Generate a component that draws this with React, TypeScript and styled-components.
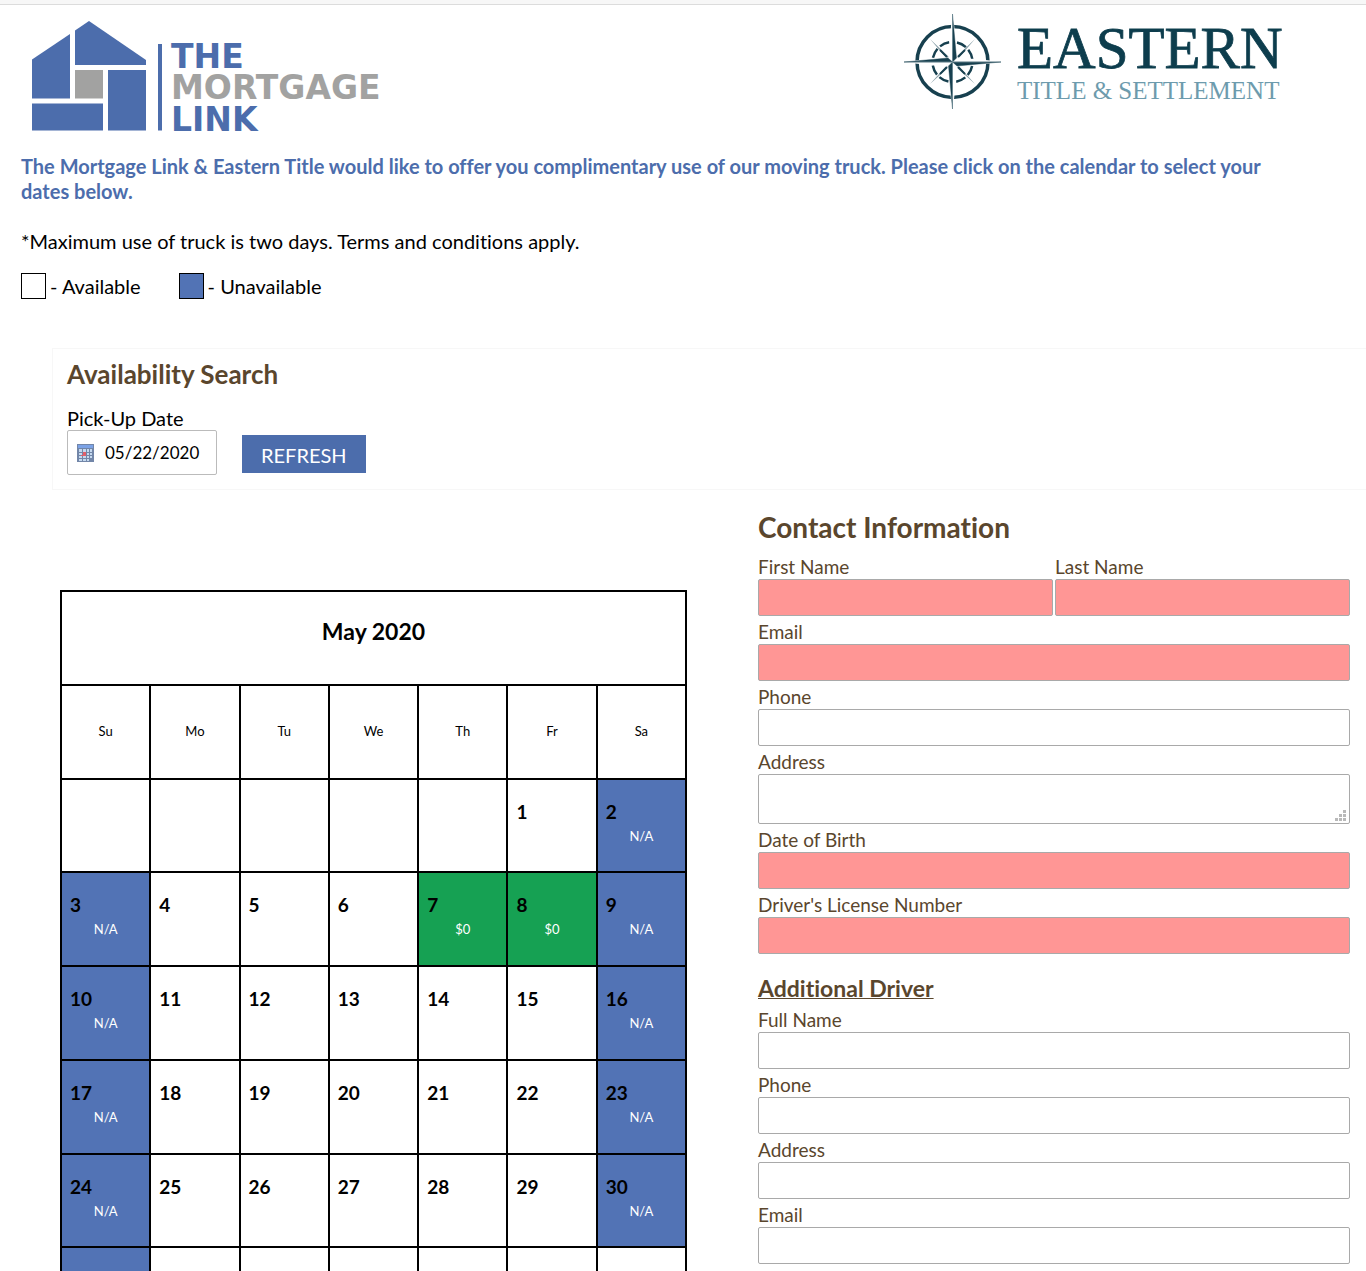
import React, { useId, useState } from 'react';
import styled, { createGlobalStyle, css } from 'styled-components';

const BLUE = '#4c6dac';
const BROWN = '#5a462d';

const GlobalStyle = createGlobalStyle`
  *, *::before, *::after { box-sizing: border-box; }
  body {
    margin: 0;
    background: #fff;
    color: #000;
    font-family: Lato, "Open Sans", sans-serif;
    font-size: 20px;
    line-height: 25px;
    font-variant-ligatures: none;
  }
`;

const Page = styled.div`
  height: 100vh;
  overflow-x: hidden;
  overflow-y: auto;
  scrollbar-width: none;
`;

const TopStrip = styled.div`
  height: 5px;
  background: #f7f7f7;
  border-bottom: 1px solid #dcdcdc;
`;

const Header = styled.header`
  display: flex;
  justify-content: space-between;
  align-items: flex-start;
  padding: 7px 80px 0 29px;
`;

const LinkLogo = styled.svg`
  display: block;
  width: 363px;
  height: 130px;
`;

const EasternLogo = styled.svg`
  display: block;
  width: 383px;
  height: 100px;
`;

const Intro = styled.section`
  padding: 12px 80px 0 21px;
`;

const Offer = styled.p`
  margin: 0 0 25px;
  color: ${BLUE};
  font-weight: 700;
`;

const Terms = styled.p`
  margin: 0 0 19px;
`;

const Legend = styled.ul`
  display: flex;
  gap: 38px;
  margin: 0;
  padding: 0;
  list-style: none;
`;

const LegendItem = styled.li`
  display: flex;
  align-items: center;
  gap: 4px;
`;

const Swatch = styled.span<{ $color: string }>`
  width: 25px;
  height: 26px;
  border: 1px solid #000;
  background: ${(p) => p.$color};
`;

const SearchPanel = styled.form`
  margin: 49px 0 0 52px;
  padding: 9px 14px 14px;
  border: 1px solid #f7f7f7;
  border-right: 0;
`;

const SearchTitle = styled.h2`
  margin: 0 0 17px;
  color: ${BROWN};
  font-size: 26px;
  line-height: 32px;
  font-weight: 700;
`;

const SearchRow = styled.div`
  display: flex;
  align-items: flex-end;
  gap: 25px;
`;

const DateField = styled.div`
  display: flex;
  flex-direction: column;
  width: 150px;
`;

const DateLabel = styled.label`
  line-height: 23px;
`;

const DateBox = styled.span`
  display: flex;
  align-items: center;
  gap: 11px;
  height: 45px;
  padding: 0 9px;
  border: 1px solid #bbb;
  border-radius: 2px;
`;

const DateInput = styled.input`
  flex: 1;
  min-width: 0;
  padding: 0;
  border: 0;
  outline: 0;
  background: transparent;
  color: #000;
  font: inherit;
  font-size: 17px;
`;

const RefreshButton = styled.button`
  height: 38px;
  margin-bottom: 2px;
  padding: 2px 19px 0;
  border: 0;
  background: ${BLUE};
  color: #fff;
  font: inherit;
  cursor: pointer;
`;

const Columns = styled.main`
  display: grid;
  grid-template-columns: minmax(0, 627fr) minmax(0, 592fr);
  column-gap: 71px;
  align-items: start;
  padding: 19px 16px 16px 60px;
`;

const Calendar = styled.table`
  width: 100%;
  height: 752px;
  margin-top: 81px;
  table-layout: fixed;
  border-collapse: collapse;

  tr { height: 12.5%; }
  th, td { border: 2px solid #000; }
`;

const MonthCell = styled.th`
  padding: 0 0 12px;
  font-size: 23px;
  font-weight: 700;
`;

const WeekdayCell = styled.th`
  padding: 0;
  font-size: 13px;
  font-weight: 400;
`;

type DayState = 'open' | 'taken' | 'picked';

const DAY_COLORS: Record<DayState, string> = {
  open: '#fff',
  taken: '#5273b5',
  picked: '#16a153',
};

const DayCell = styled.td<{ $state: DayState }>`
  padding: 19px 0 0 8px;
  vertical-align: top;
  background: ${(p) => DAY_COLORS[p.$state]};
`;

const DayNumber = styled.div`
  font-size: 19px;
  font-weight: 700;
`;

const DayNote = styled.div`
  padding-right: 8px;
  color: #fff;
  font-size: 13px;
  line-height: 24px;
  text-align: center;
`;

const ContactForm = styled.form`
  color: ${BROWN};
  font-size: 19px;
`;

const ContactTitle = styled.h1`
  margin: 0 0 9px;
  font-size: 28px;
  line-height: 36px;
  font-weight: 700;
`;

const DriverTitle = styled.h2`
  margin: 19px 0 4px;
  font-size: 23px;
  line-height: 30px;
  font-weight: 700;
  text-decoration: underline;
  text-decoration-thickness: 1px;
`;

const NameRow = styled.div`
  display: grid;
  grid-template-columns: 1fr 1fr;
  gap: 2px;
`;

const FieldBox = styled.div`
  display: flex;
  flex-direction: column;
  margin-bottom: 3px;
`;

const FieldLabel = styled.label`
  line-height: 25px;
`;

const control = css`
  width: 100%;
  padding: 0 8px;
  border: 1px solid #a9a9a9;
  border-radius: 2px;
  outline: 0;
  color: #000;
  font: inherit;
`;

const TextInput = styled.input<{ $required?: boolean }>`
  ${control}
  height: 37px;
  background: ${(p) => (p.$required ? '#ff9695' : '#fff')};
`;

const AreaWrap = styled.div`
  position: relative;
  display: flex;
`;

const TextArea = styled.textarea`
  ${control}
  height: 50px;
  resize: none;
  background: #fff;
`;

const Grip = styled.svg`
  position: absolute;
  right: 4px;
  bottom: 3px;
  width: 11px;
  height: 11px;
  pointer-events: none;
`;

function Field({ label, required, multiline }: { label: string; required?: boolean; multiline?: boolean }) {
  const id = useId();
  return (
    <FieldBox>
      <FieldLabel htmlFor={id}>{label}</FieldLabel>
      {multiline ? (
        <AreaWrap>
          <TextArea id={id} />
          <Grip viewBox="0 0 11 11" fill="#b9b9b9" aria-hidden="true">
            <path d="M8 0h3v3H8zM4 4h3v3H4zM8 4h3v3H8zM0 8h3v3H0zM4 8h3v3H4zM8 8h3v3H8z" />
          </Grip>
        </AreaWrap>
      ) : (
        <TextInput id={id} $required={required} />
      )}
    </FieldBox>
  );
}

function MortgageLinkLogo() {
  return (
    <LinkLogo viewBox="29 12 363 130" role="img" aria-label="The Mortgage Link">
      <g fill={BLUE}>
        <path d="M32 59.500L70 34V98.500H32z" />
        <path d="M75 30.500L89 21L146 60V65H75z" />
        <path d="M32 103.500H103V130.500H32z" />
        <path d="M108 70H146V130.500H108z" />
        <path d="M158 44H162V130.500H158z" />
      </g>
      <path d="M75 70H103V98.500H75z" fill="#a2a2a1" />
      <g fontFamily="'DejaVu Sans', sans-serif" fontWeight="700" fontSize="33">
        <text x="171" y="67.500" fill={BLUE}>THE</text>
        <text x="171" y="99" fill="#a2a2a1">MORTGAGE</text>
        <text x="171" y="130.500" fill={BLUE}>LINK</text>
      </g>
    </LinkLogo>
  );
}

function EasternTitleLogo() {
  return (
    <EasternLogo viewBox="903 12 383 100" role="img" aria-label="Eastern Title & Settlement">
      <g fill="none" stroke="#17404f">
        <circle cx="952.500" cy="62" r="35.500" strokeWidth="3.500" />
        <circle
          cx="952.500"
          cy="62"
          r="20"
          strokeWidth="2.500"
          strokeDasharray="10 3.400 10 8.016"
          strokeDashoffset="-4"
        />
      </g>
      <g fill="#8ba1a9">
        <path d="M930 39L949 57L947 59zM975 39L956 57L958 59zM930 84L949 67L947 65zM975 84L956 67L958 65z" />
      </g>
      <path
        d="M940 50L947 57M965 50L958 57M940 74L947 67M965 74L958 67"
        stroke="#17404f"
        strokeWidth="1.800"
      />
      <path
        d="M952.500 14L957 58L952.500 62L949 58zM952.500 109L957 66L952.500 62L948 66zM904 62L948 58L952.500 62L948 66zM1001 62L957 58L952.500 62L957 66z"
        fill="#fff"
        stroke="#fff"
      />
      <path
        d="M952.500 14L956.500 58L952.500 62zM952.500 109L948.500 66L952.500 62zM904 62L948 58L952.500 62zM1001 62L957 66L952.500 62z"
        fill="#17404f"
        stroke="#17404f"
        strokeWidth="0.400"
      />
      <path d="M952.500 14V109M904 62H1001" stroke="#6f8c96" strokeWidth="0.800" />
      <g fontFamily="'Liberation Serif', serif">
        <text x="1017" y="68" fontSize="59" fill="#0d3d4d" stroke="#0d3d4d" strokeWidth="0.800">EASTERN</text>
        <text x="1017" y="99" fontSize="25" fill="#6d9bad">TITLE &amp; SETTLEMENT</text>
      </g>
    </EasternLogo>
  );
}

function CalendarIcon() {
  return (
    <svg width="17" height="18" viewBox="0 0 17 18" aria-hidden="true">
      <rect width="17" height="18" fill="#7286a8" />
      <rect x="1" y="1" width="15" height="3" fill="#7ba2e6" />
      <path
        d="M2 5h3v3H2zM6 5h3v3H6zM10 5h2v3h-2zM13 5h2v3h-2zM2 9h3v2H2zM10 9h2v2h-2zM13 9h2v2h-2zM2 12h3v2H2zM6 12h3v2H6zM10 12h2v2h-2zM13 12h2v2h-2zM2 15h3v2H2zM6 15h3v2H6zM10 15h2v2h-2z"
        fill="#c5d9ef"
      />
      <path d="M6 8h3v4H6zM4 11h2v1H4z" fill="#e0606c" />
    </svg>
  );
}

const WEEKDAYS = ['Su', 'Mo', 'Tu', 'We', 'Th', 'Fr', 'Sa'];
const PICKED = [7, 8];
const FIRST_WEEKDAY = 5;
const DAYS_IN_MONTH = 31;

const weeks = Array.from({ length: 6 }, (_, w) =>
  WEEKDAYS.map((_, d) => {
    const day = w * 7 + d - FIRST_WEEKDAY + 1;
    return day >= 1 && day <= DAYS_IN_MONTH ? day : null;
  }),
);

function stateOf(day: number | null, weekday: number): DayState {
  if (day === null) return 'open';
  if (PICKED.includes(day)) return 'picked';
  return weekday === 0 || weekday === 6 ? 'taken' : 'open';
}

const NOTES: Record<DayState, string> = { open: '', taken: 'N/A', picked: '$0' };

function MonthCalendar() {
  return (
    <Calendar>
      <tbody>
        <tr>
          <MonthCell colSpan={7}>May 2020</MonthCell>
        </tr>
        <tr>
          {WEEKDAYS.map((name) => (
            <WeekdayCell key={name} scope="col">{name}</WeekdayCell>
          ))}
        </tr>
        {weeks.map((week, w) => (
          <tr key={w}>
            {week.map((day, d) => {
              const state = stateOf(day, d);
              return (
                <DayCell key={d} $state={state}>
                  {day !== null && <DayNumber>{day}</DayNumber>}
                  {state !== 'open' && <DayNote>{NOTES[state]}</DayNote>}
                </DayCell>
              );
            })}
          </tr>
        ))}
      </tbody>
    </Calendar>
  );
}

export default function App() {
  const [pickUp, setPickUp] = useState('05/22/2020');
  return (
    <Page>
      <GlobalStyle />
      <TopStrip />
      <Header>
        <MortgageLinkLogo />
        <EasternTitleLogo />
      </Header>
      <Intro>
        <Offer>
          The Mortgage Link &amp; Eastern Title would like to offer you complimentary use of our moving truck. Please
          click on the calendar to select your dates below.
        </Offer>
        <Terms>*Maximum use of truck is two days. Terms and conditions apply.</Terms>
        <Legend>
          <LegendItem><Swatch $color="#fff" />- Available</LegendItem>
          <LegendItem><Swatch $color="#5273b5" />- Unavailable</LegendItem>
        </Legend>
      </Intro>
      <SearchPanel onSubmit={(e) => e.preventDefault()}>
        <SearchTitle>Availability Search</SearchTitle>
        <SearchRow>
          <DateField>
            <DateLabel htmlFor="pickup">Pick-Up Date</DateLabel>
            <DateBox>
              <CalendarIcon />
              <DateInput id="pickup" value={pickUp} onChange={(e) => setPickUp(e.target.value)} />
            </DateBox>
          </DateField>
          <RefreshButton type="submit">REFRESH</RefreshButton>
        </SearchRow>
      </SearchPanel>
      <Columns>
        <MonthCalendar />
        <ContactForm onSubmit={(e) => e.preventDefault()}>
          <ContactTitle>Contact Information</ContactTitle>
          <NameRow>
            <Field label="First Name" required />
            <Field label="Last Name" required />
          </NameRow>
          <Field label="Email" required />
          <Field label="Phone" />
          <Field label="Address" multiline />
          <Field label="Date of Birth" required />
          <Field label="Driver's License Number" required />
          <DriverTitle>Additional Driver</DriverTitle>
          <Field label="Full Name" />
          <Field label="Phone" />
          <Field label="Address" />
          <Field label="Email" />
        </ContactForm>
      </Columns>
    </Page>
  );
}
